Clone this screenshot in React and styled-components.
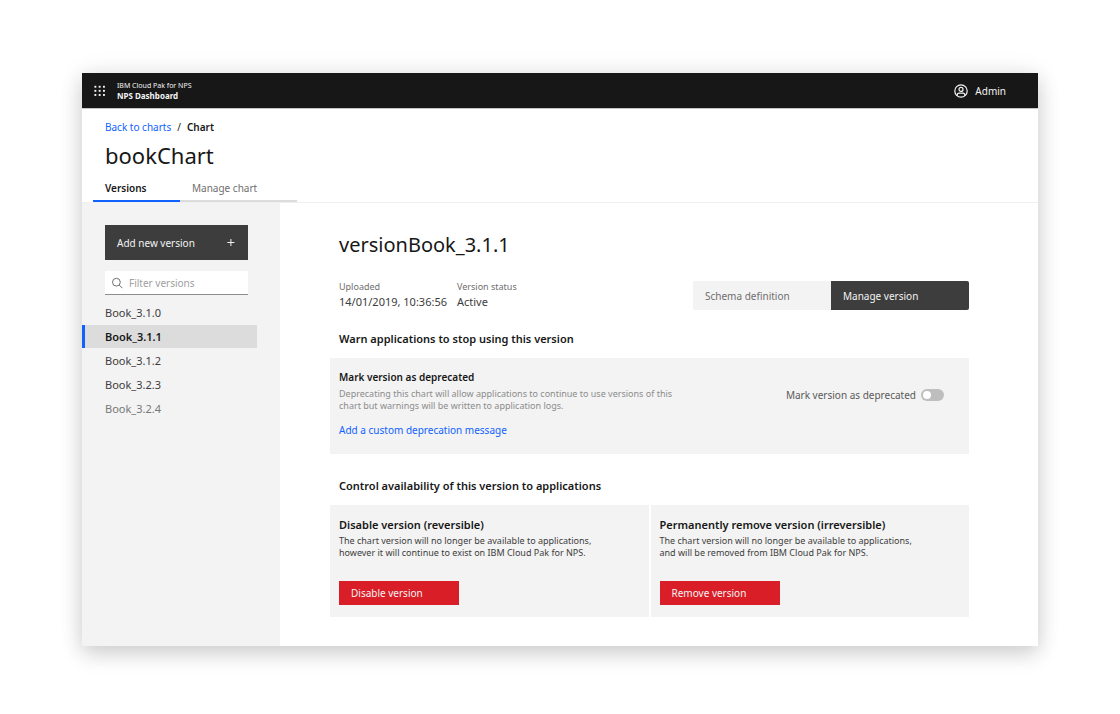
import React, { useState } from "react";
import styled, { createGlobalStyle, css } from "styled-components";

const GlobalStyle = createGlobalStyle`
  *, *::before, *::after { box-sizing: border-box; }
  body {
    margin: 0;
    background: #fff;
    color: #171717;
    font-family: "Noto Sans", "Open Sans", sans-serif;
    font-size: 10px;
    line-height: 16px;
  }
  button, input { font: inherit; color: inherit; }
  h1, h2, h3, p, ul, dl, dd { margin: 0; padding: 0; }
  a { color: #0f62fe; text-decoration: none; }
`;

const Page = styled.div`
  display: flex;
  min-height: 100vh;
  padding: 73px 82px 68px;
`;

const Window = styled.div`
  flex: 1;
  min-width: 0;
  display: flex;
  flex-direction: column;
  background: #fff;
  box-shadow: 0 8px 20px rgba(0, 0, 0, 0.16), 0 0 24px rgba(0, 0, 0, 0.08);
`;

const TopBar = styled.header`
  display: flex;
  align-items: center;
  height: 36px;
  padding: 0 32px 0 12px;
  background: #171717;
  border-bottom: 1px solid #c6c6c6;
  color: #f3f3f3;
`;

const MenuButton = styled.button`
  display: flex;
  padding: 0;
  border: 0;
  background: none;
`;

const Brand = styled.div`
  display: flex;
  flex-direction: column;
  margin-left: 11px;
`;

const Product = styled.span`
  font-size: 7px;
  line-height: 10px;
`;

const Dashboard = styled.strong`
  font-size: 8px;
  line-height: 10px;
  font-weight: 700;
`;

const UserButton = styled.button`
  display: flex;
  align-items: center;
  gap: 7px;
  margin-left: auto;
  padding: 0;
  border: 0;
  background: none;
`;

const PageHeader = styled.div`
  padding: 10px 23px 0;
  border-bottom: 1px solid #f0f0f0;
`;

const Breadcrumb = styled.nav`
  display: flex;
  gap: 6px;
`;

const Current = styled.span`
  font-weight: 600;
`;

const ChartTitle = styled.h1`
  margin-top: 4px;
  font-size: 22px;
  line-height: 32px;
  font-weight: 400;
`;

const Tabs = styled.div`
  display: flex;
  margin: 9px 0 0 -12px;
`;

const Tab = styled.button`
  width: ${(p) => (p.$active ? 87 : 117)}px;
  height: 22px;
  padding: 0 12px 4px;
  border: 0;
  border-bottom: 2px solid ${(p) => (p.$active ? "#0f62fe" : "#dcdcdc")};
  background: none;
  color: ${(p) => (p.$active ? "#171717" : "#6f6f6f")};
  font-weight: ${(p) => (p.$active ? 600 : 400)};
  text-align: left;
`;

const Body = styled.div`
  flex: 1;
  display: flex;
`;

const Sidebar = styled.aside`
  flex: 0 0 198px;
  padding: 22px 0;
  background: #f3f3f3;
`;

const AddButton = styled.button`
  display: flex;
  align-items: center;
  justify-content: space-between;
  width: 143px;
  height: 35px;
  margin-left: 23px;
  padding: 0 12px;
  border: 0;
  background: #3d3d3d;
  color: #f3f3f3;
`;

const Filter = styled.label`
  display: flex;
  align-items: center;
  gap: 6px;
  width: 143px;
  height: 24px;
  margin: 11px 0 6px 23px;
  padding: 0 6px;
  border-bottom: 1px solid #8c8c8c;
  background: #fff;
`;

const FilterInput = styled.input`
  flex: 1;
  min-width: 0;
  padding: 0;
  border: 0;
  outline: 0;
  background: none;
  &::placeholder { color: #a0a0a0; opacity: 1; }
`;

const VersionList = styled.ul`
  display: flex;
  flex-direction: column;
  gap: 1px;
  width: 175px;
  list-style: none;
`;

const VersionLink = styled.a`
  display: block;
  padding: 0 0 0 20px;
  border-left: 3px solid transparent;
  font-size: 11px;
  line-height: 23px;
  color: ${(p) => (p.$muted ? "#777" : "#3d3d3d")};
  ${(p) =>
    p.$active &&
    css`
      border-left-color: #0f62fe;
      background: #dcdcdc;
      color: #171717;
      font-weight: 600;
    `}
`;

const Main = styled.main`
  flex: 1;
  min-width: 0;
  padding: 30px 69px 28px 50px;
`;

const VersionTitle = styled.h2`
  padding-left: 9px;
  font-size: 20px;
  line-height: 24px;
  font-weight: 400;
`;

const InfoRow = styled.div`
  display: flex;
  align-items: flex-start;
  justify-content: space-between;
  margin-top: 24px;
  padding-left: 9px;
`;

const Facts = styled.dl`
  display: flex;
  gap: 10px;
`;

const FactLabel = styled.dt`
  font-size: 9px;
  line-height: 12px;
  color: #6f6f6f;
`;

const FactValue = styled.dd`
  font-size: 11px;
  line-height: 18px;
  color: #3d3d3d;
`;

const Switcher = styled.div`
  display: flex;
  border-radius: 2px;
  overflow: hidden;
`;

const SwitchButton = styled.button`
  width: 138px;
  height: 29px;
  padding: 0 12px;
  border: 0;
  background: ${(p) => (p.$active ? "#3d3d3d" : "#f3f3f3")};
  color: ${(p) => (p.$active ? "#f3f3f3" : "#6f6f6f")};
  text-align: left;
`;

const SectionTitle = styled.h3`
  margin: ${(p) => p.$top}px 0 11px;
  padding-left: 9px;
  font-size: 11px;
  font-weight: 600;
`;

const Panel = styled.section`
  display: flex;
  align-items: center;
  justify-content: space-between;
  padding: 11px 25px 16px 9px;
  background: #f3f3f3;
`;

const PanelTitle = styled.h4`
  margin: 0 0 3px;
  font-size: 10px;
  font-weight: 600;
`;

const Description = styled.p`
  font-size: 9px;
  line-height: 12px;
  color: ${(p) => (p.$muted ? "#8c8c8c" : "#3d3d3d")};
`;

const MessageLink = styled.a`
  display: inline-block;
  margin-top: 10px;
`;

const ToggleLabel = styled.label`
  display: flex;
  align-items: center;
  gap: 5px;
  align-self: flex-start;
  margin-top: 18px;
  color: #5a5a5a;
`;

const Toggle = styled.input`
  appearance: none;
  display: flex;
  align-items: center;
  width: 23px;
  height: 12px;
  margin: 0;
  padding: 0 2px;
  border-radius: 6px;
  background: #bebebe;
  &::before {
    content: "";
    width: 8px;
    height: 8px;
    border-radius: 50%;
    background: #fff;
  }
  &:checked { justify-content: flex-end; background: #24a148; }
`;

const Cards = styled.div`
  display: grid;
  grid-template-columns: 1fr 1fr;
  gap: 2px;
`;

const Card = styled.section`
  padding: 12px 9px;
  background: #f3f3f3;
`;

const CardTitle = styled.h4`
  margin: 0 0 2px;
  font-size: 11px;
  font-weight: 600;
`;

const DangerButton = styled.button`
  width: 120px;
  height: 24px;
  margin-top: 22px;
  padding: 0 12px;
  border: 0;
  background: #da1e28;
  color: #f3f3f3;
  text-align: left;
`;

const GridIcon = () => (
  <svg width="12" height="12" viewBox="0 0 12 12" fill="#f3f3f3" aria-hidden="true">
    {[0.8, 4.9, 9].map((y) =>
      [0.4, 4.7, 9].map((x) => <rect key={`${x}-${y}`} x={x} y={y} width="1.9" height="1.9" />)
    )}
  </svg>
);

const UserIcon = () => (
  <svg width="14" height="14" viewBox="0 0 14 14" fill="none" stroke="#f3f3f3" strokeWidth="1.2" aria-hidden="true">
    <circle cx="7" cy="7" r="6.2" />
    <circle cx="7" cy="5.4" r="2" />
    <path d="M3.3 11.8v-1a1.6 1.6 0 0 1 1.6-1.6h4.2a1.6 1.6 0 0 1 1.6 1.6v1" />
  </svg>
);

const PlusIcon = () => (
  <svg width="12" height="12" viewBox="0 0 12 12" stroke="#f3f3f3" aria-hidden="true">
    <path d="M6.9 2v7M3.4 5.5h7" />
  </svg>
);

const SearchIcon = () => (
  <svg width="12" height="12" viewBox="0 0 12 12" fill="none" stroke="#6f6f6f" aria-hidden="true">
    <circle cx="5.4" cy="5.2" r="3.9" />
    <path d="M8.3 8.1l3.1 3.1" />
  </svg>
);

const versions = ["Book_3.1.0", "Book_3.1.1", "Book_3.1.2", "Book_3.2.3", "Book_3.2.4"];

export default function App() {
  const [selected, setSelected] = useState("Book_3.1.1");
  return (
    <>
      <GlobalStyle />
      <Page>
        <Window>
          <TopBar>
            <MenuButton aria-label="Menu"><GridIcon /></MenuButton>
            <Brand>
              <Product>IBM Cloud Pak for NPS</Product>
              <Dashboard>NPS Dashboard</Dashboard>
            </Brand>
            <UserButton><UserIcon />Admin</UserButton>
          </TopBar>
          <PageHeader>
            <Breadcrumb>
              <a href="#charts">Back to charts</a>
              <span>/</span>
              <Current>Chart</Current>
            </Breadcrumb>
            <ChartTitle>bookChart</ChartTitle>
            <Tabs role="tablist">
              <Tab role="tab" aria-selected="true" $active>Versions</Tab>
              <Tab role="tab" aria-selected="false">Manage chart</Tab>
            </Tabs>
          </PageHeader>
          <Body>
            <Sidebar>
              <AddButton>Add new version<PlusIcon /></AddButton>
              <Filter>
                <SearchIcon />
                <FilterInput type="text" placeholder="Filter versions" aria-label="Filter versions" />
              </Filter>
              <VersionList>
                {versions.map((v) => (
                  <li key={v}>
                    <VersionLink
                      href={`#${v}`}
                      $active={v === selected}
                      $muted={v === "Book_3.2.4"}
                      onClick={() => setSelected(v)}
                    >
                      {v}
                    </VersionLink>
                  </li>
                ))}
              </VersionList>
            </Sidebar>
            <Main>
              <VersionTitle>versionBook_3.1.1</VersionTitle>
              <InfoRow>
                <Facts>
                  <div>
                    <FactLabel>Uploaded</FactLabel>
                    <FactValue>14/01/2019, 10:36:56</FactValue>
                  </div>
                  <div>
                    <FactLabel>Version status</FactLabel>
                    <FactValue>Active</FactValue>
                  </div>
                </Facts>
                <Switcher>
                  <SwitchButton>Schema definition</SwitchButton>
                  <SwitchButton $active>Manage version</SwitchButton>
                </Switcher>
              </InfoRow>
              <SectionTitle $top={20}>Warn applications to stop using this version</SectionTitle>
              <Panel>
                <div>
                  <PanelTitle>Mark version as deprecated</PanelTitle>
                  <Description $muted>
                    Deprecating this chart will allow applications to continue to use versions of this
                    <br />
                    chart but warnings will be written to application logs.
                  </Description>
                  <MessageLink href="#message">Add a custom deprecation message</MessageLink>
                </div>
                <ToggleLabel>
                  Mark version as deprecated
                  <Toggle type="checkbox" role="switch" />
                </ToggleLabel>
              </Panel>
              <SectionTitle $top={24}>Control availability of this version to applications</SectionTitle>
              <Cards>
                <Card>
                  <CardTitle>Disable version (reversible)</CardTitle>
                  <Description>
                    The chart version will no longer be available to applications,
                    <br />
                    however it will continue to exist on IBM Cloud Pak for NPS.
                  </Description>
                  <DangerButton>Disable version</DangerButton>
                </Card>
                <Card>
                  <CardTitle>Permanently remove version (irreversible)</CardTitle>
                  <Description>
                    The chart version will no longer be available to applications,
                    <br />
                    and will be removed from IBM Cloud Pak for NPS.
                  </Description>
                  <DangerButton>Remove version</DangerButton>
                </Card>
              </Cards>
            </Main>
          </Body>
        </Window>
      </Page>
    </>
  );
}
